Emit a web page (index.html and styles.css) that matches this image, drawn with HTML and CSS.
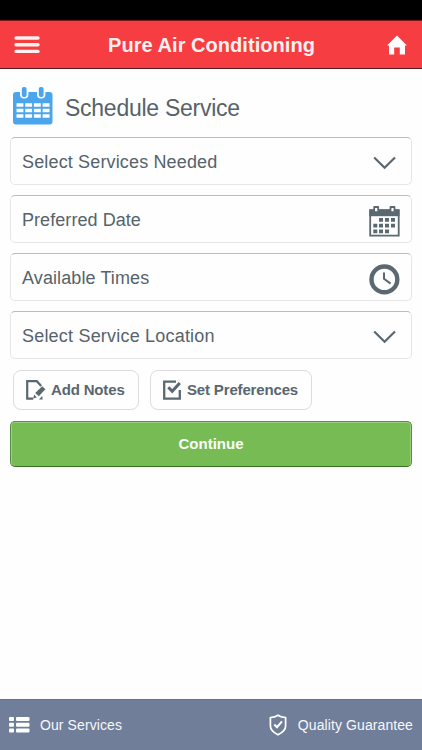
FILE: index.html
```html
<!DOCTYPE html>
<html lang="en">
<head>
<meta charset="utf-8">
<meta name="viewport" content="width=device-width">
<title>Schedule Service</title>
<link rel="stylesheet" href="styles.css">
</head>
<body>
<div class="status"></div>
<header class="bar">
  <svg class="menu" width="26" height="18" viewBox="0 0 26 18"><path d="M2 2h22M2 8.8h22M2 15.4h22" fill="none" stroke="#fff0f0" stroke-width="3.4" stroke-linecap="round"/></svg>
  <h1><span class="t-title">Pure Air Conditioning</span></h1>
  <svg class="home" width="20" height="20" viewBox="0 0 20 20"><path d="M10 .5 20 10.5h-2V19.5h-5.2v-7H7.2v7H2v-9H0z" fill="#fff"/></svg>
</header>
<main>
  <div class="heading">
    <svg width="40" height="38" viewBox="0 0 40 38">
      <rect x="0" y="5" width="39.5" height="32.5" rx="3" fill="#4ba5ec"/>
      <rect x="7" y="-2" width="8.4" height="13.5" rx="4" fill="#fefefe"/>
      <rect x="24" y="-2" width="8.4" height="13.5" rx="4" fill="#fefefe"/>
      <rect x="8.8" y="0" width="4.8" height="10" rx="2" fill="#4ba5ec"/>
      <rect x="25.8" y="0" width="4.8" height="10" rx="2" fill="#4ba5ec"/>
      <path d="M3.5 18h33M3.5 23.5h33M3.5 29h33" stroke="#fefefe" stroke-width="3.6" stroke-dasharray="6.9 1.8" fill="none"/>
    </svg>
    <h2><span class="t-heading">Schedule Service</span></h2>
  </div>
  <div class="field"><span class="t-f1">Select Services Needed</span>
    <svg class="chev" width="24" height="14" viewBox="0 0 24 14"><path d="M1.2 1.5 11.6 11.7 22 1.5" fill="none" stroke="#5a6770" stroke-width="2.2"/></svg>
  </div>
  <div class="field"><span class="t-f2">Preferred Date</span>
    <svg class="cal" width="31" height="31" viewBox="0 0 31 31">
      <path d="M1.2 4.2h28.5v25.4H1.2z" fill="#fefefe" stroke="#5a6971" stroke-width="1.8"/>
      <path d="M.3 3.5h30.2v6.7H.3z" fill="#5a6971"/>
      <path d="M5.2 1h4v5.2h-4zM21.5 1h4v5.2h-4z" fill="#fefefe" stroke="#5a6971" stroke-width="1.8" stroke-linejoin="round"/>
      <path d="M10 12h4v3.8h-4zM16 12h4v3.8h-4zM22 12h4v3.8h-4zM4.3 17.8h4v3.8h-4zM10 17.8h4v3.8h-4zM16 17.8h4v3.8h-4zM22 17.8h4v3.8h-4zM4.3 23.4h4v3.8h-4zM10 23.4h4v3.8h-4zM16 23.4h4v3.8h-4z" fill="#5a6971"/>
    </svg>
  </div>
  <div class="field"><span class="t-f3">Available Times</span>
    <svg class="clock" width="31" height="31" viewBox="0 0 31 31"><circle cx="15.4" cy="15.4" r="12.9" fill="none" stroke="#5a6971" stroke-width="4.4"/><path d="M15 8.6v6.2l6.6 4.8" fill="none" stroke="#5a6971" stroke-width="2"/></svg>
  </div>
  <div class="field"><span class="t-f4">Select Service Location</span>
    <svg class="chev" width="24" height="14" viewBox="0 0 24 14"><path d="M1.2 1.5 11.6 11.7 22 1.5" fill="none" stroke="#5a6770" stroke-width="2.2"/></svg>
  </div>
  <div class="options">
    <button class="option notes">
      <svg width="20" height="20" viewBox="0 0 20 20"><path d="M15.2 6 10.8 1.2H1.2v17.4h6" fill="none" stroke="#5a6971" stroke-width="2.2"/><path d="M16.2 6.3 19.4 9.3 12.8 16.2 9.2 13zM8.2 14.6 10.8 17.4 7.2 18.4zM16.3 16l.3 3.6h-3.7z" fill="#5a6971"/></svg>
      <span class="t-notes">Add Notes</span>
    </button>
    <button class="option prefs">
      <svg width="19" height="20" viewBox="0 0 19 20"><path d="M13 1.6H1.2v17h15.6V10" fill="none" stroke="#5a6971" stroke-width="2.3"/><path d="M5.3 7.2 9.2 11.3 16.8 3" fill="none" stroke="#5a6971" stroke-width="3"/></svg>
      <span class="t-prefs">Set Preferences</span>
    </button>
  </div>
  <button class="continue"><span class="t-cont">Continue</span></button>
</main>
<footer>
  <a class="services">
    <svg width="21" height="16" viewBox="0 0 21 16"><g fill="#fff"><rect y="0" width="5" height="4" rx="1"/><rect y="5.7" width="5" height="4" rx="1"/><rect y="11.4" width="5" height="4" rx="1"/><rect x="7" y="0" width="13.5" height="4" rx="1"/><rect x="7" y="5.7" width="13.5" height="4" rx="1"/><rect x="7" y="11.4" width="13.5" height="4" rx="1"/></g></svg>
    <span class="t-serv">Our Services</span>
  </a>
  <a class="quality">
    <svg width="18" height="22" viewBox="0 0 18 22"><path d="M9 1.2Q12 3.4 16.6 3.5V12q0 5-7.6 8.8Q1.4 17 1.4 12V3.5Q6 3.4 9 1.2z" fill="none" stroke="#fff" stroke-width="1.7" stroke-linejoin="round"/><path d="M5.3 10.5 8 13.2 13 7.4" fill="none" stroke="#fff" stroke-width="2"/></svg>
    <span class="t-qual">Quality Guarantee</span>
  </a>
</footer>
</body>
</html>
```
FILE: styles.css
```css
* { box-sizing: border-box; }
body {
  margin: 0;
  height: 750px;
  display: flex;
  flex-direction: column;
  overflow: hidden;
  background: #fefefe;
  color: #56636b;
  font-family: "Liberation Sans", Arial, sans-serif;
}
svg { display: block; flex: none; }
span { white-space: nowrap; }
h1, h2 { margin: 0; }
button { font: inherit; color: inherit; margin: 0; }
.status { height: 20px; background: #000; }
.bar {
  height: 49px;
  display: flex;
  align-items: center;
  padding: 0 15px 0 14px;
  background: #f63d42;
  border-top: 1px solid #7c171a;
  border-bottom: 1px solid #541c1e;
}
.bar h1 {
  flex: 1;
  padding-left: 68px;
  color: #fff0f0;
  font-size: 20px;
  line-height: 24px;
  font-weight: bold;
  letter-spacing: 0.05px;
}
main { flex: 1; padding: 0 10px; }
.heading {
  height: 68px;
  display: flex;
  align-items: flex-start;
  padding: 18px 0 0 3px;
  gap: 12px;
}
.heading h2 {
  margin-top: 8px;
  font-size: 23px;
  line-height: 26px;
  font-weight: normal;
  letter-spacing: -0.26px;
}
.field {
  height: 48px;
  margin-bottom: 10px;
  padding: 0 10px 0 11px;
  display: flex;
  align-items: center;
  justify-content: space-between;
  border: 1px solid #e6e6e6;
  border-top-color: #bcbcbc;
  border-radius: 5px;
  font-size: 18px;
  line-height: 22px;
}
.field span { margin-top: 1px; }
.t-f1 { letter-spacing: 0.15px; }
.t-f2 { letter-spacing: 0.06px; }
.t-f3 { letter-spacing: 0.1px; }
.t-f4 { letter-spacing: 0.2px; }
.chev { margin: 3px 4px 0 0; }
.cal { margin: 5px 1px 0 0; }
.clock { margin: 4px 1px 0 0; }
.options { display: flex; gap: 11px; padding: 1px 0 0 3px; }
.option {
  height: 40px;
  padding: 0 0 0 12px;
  display: flex;
  align-items: center;
  background: #fefefe;
  border: 1px solid #dcdcdf;
  border-radius: 8px;
  font-size: 15px;
  font-weight: bold;
  color: #5a6670;
}
.option span { margin-top: -1px; letter-spacing: -0.16px; }
.notes { width: 126px; gap: 5px; }
.prefs { width: 162px; gap: 5px; }
.continue {
  display: block;
  width: 402px;
  height: 46px;
  margin-top: 11px;
  padding: 0 0 2px;
  background: #77bb55;
  border: 1px solid #559141;
  border-bottom-color: #367124;
  border-radius: 5px;
  box-shadow: inset 0 1px #98ce7c, inset 1px 0 #98ce7c, inset -1px 0 #98ce7c;
  color: #fbfff9;
  font-size: 15px;
  font-weight: bold;
}
footer {
  height: 51px;
  display: flex;
  align-items: center;
  justify-content: space-between;
  padding: 0 9px;
  background: #717e9a;
  border-top: 1px solid #66718a;
  color: #f6f8fc;
  font-size: 14px;
  letter-spacing: 0.09px;
}
footer a { display: flex; align-items: center; }
.services { gap: 10px; }
.quality { gap: 11px; }
```
